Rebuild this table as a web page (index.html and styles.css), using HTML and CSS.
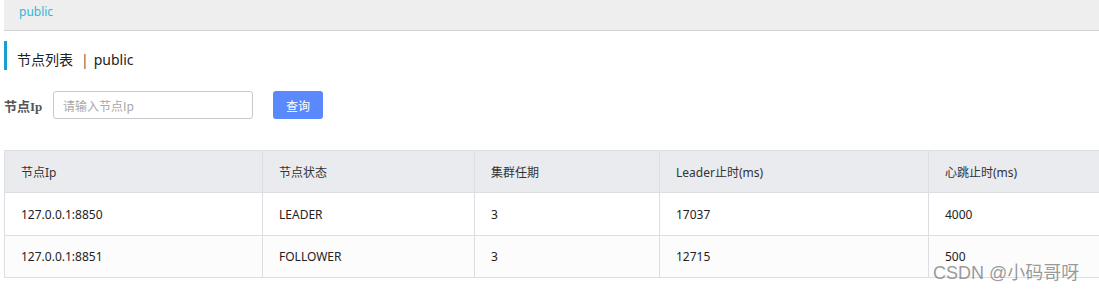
FILE: index.html
```html
<!DOCTYPE html>
<html lang="zh">
<head>
<meta charset="utf-8">
<title>节点列表</title>
<link rel="stylesheet" href="styles.css">
</head>
<body>
<div class="page">
  <div class="topbar"><span class="crumb">public</span></div>
  <div class="title">节点列表<span class="sep">|</span>public</div>
  <div class="search">
    <span class="label">节点Ip</span>
    <input class="input" type="text" placeholder="请输入节点Ip">
    <button class="btn">查询</button>
  </div>
  <div class="table-wrap">
    <table class="grid">
      <colgroup>
        <col class="c1"><col class="c2"><col class="c3"><col class="c4"><col class="c5">
      </colgroup>
      <thead>
        <tr><th>节点Ip</th><th>节点状态</th><th>集群任期</th><th>Leader止时(ms)</th><th>心跳止时(ms)</th></tr>
      </thead>
      <tbody>
        <tr><td>127.0.0.1:8850</td><td>LEADER</td><td>3</td><td>17037</td><td>4000</td></tr>
        <tr class="alt"><td>127.0.0.1:8851</td><td>FOLLOWER</td><td>3</td><td>12715</td><td>500</td></tr>
      </tbody>
    </table>
  </div>
  <div class="watermark">CSDN @小码哥呀</div>
</div>
</body>
</html>
```

FILE: styles.css
```css
html, body {
  margin: 0;
  padding: 0;
  background: #fff;
}
.page {
  position: relative;
  padding-left: 4px;
  font-family: "Noto Sans", "Noto Sans CJK SC", sans-serif;
  font-size: 12px;
  color: #333;
  overflow: hidden;
  height: 291px;
}
.topbar {
  height: 30px;
  line-height: 24px;
  background: #eeeeee;
  border-bottom: 1px solid #d2d2d2;
  padding-left: 15px;
}
.crumb {
  color: #2db7d9;
  font-size: 12px;
}
.title {
  margin-top: 10px;
  height: 21px;
  padding-top: 8px;
  line-height: 21px;
  border-left: 3px solid #1a9dd0;
  padding-left: 10px;
  font-size: 14px;
  color: #222;
}
.sep {
  color: #7a5a3a;
  margin: 0 5px 0 8px;
}
.search {
  margin-top: 21px;
  display: flex;
  align-items: center;
  height: 28px;
}
.label {
  font-family: "Liberation Serif", "Noto Sans CJK SC", serif;
  font-weight: bold;
  font-size: 13px;
  color: #555;
  width: 49px;
}
.input {
  box-sizing: border-box;
  width: 200px;
  height: 28px;
  border: 1px solid #c8c9cf;
  border-radius: 3px;
  padding: 0 9px;
  font-family: "Noto Sans CJK SC", sans-serif;
  font-size: 12px;
  color: #333;
  outline: none;
}
.input::placeholder {
  color: #a8a8a8;
}
.btn {
  margin-left: 20px;
  width: 50px;
  height: 28px;
  border: none;
  border-radius: 3px;
  background: #5a88fd;
  color: #fff;
  font-family: "Noto Sans CJK SC", sans-serif;
  font-size: 12px;
  padding: 0;
}
.table-wrap {
  margin-top: 31px;
  overflow: hidden;
}
.grid {
  border-collapse: collapse;
  table-layout: fixed;
  width: 1200px;
}
.c1 { width: 258px; }
.c2 { width: 212px; }
.c3 { width: 185px; }
.c4 { width: 269px; }
.c5 { width: 276px; }
.grid th, .grid td {
  border: 1px solid #dcdee3;
  padding: 0 16px;
  text-align: left;
  font-weight: normal;
  font-size: 12px;
  white-space: nowrap;
}
.grid th {
  height: 41px;
  background: #e9ebef;
  color: #333;
}
.grid td {
  height: 42px;
  color: #222;
  background: #fff;
}
.grid tr.alt td {
  height: 41px;
  background: #fcfcfc;
}
.watermark {
  position: absolute;
  left: 933px;
  top: 258px;
  font-family: "Liberation Sans", "Noto Sans CJK SC", sans-serif;
  font-size: 18px;
  color: rgba(110, 110, 110, 0.7);
  white-space: nowrap;
}
```
